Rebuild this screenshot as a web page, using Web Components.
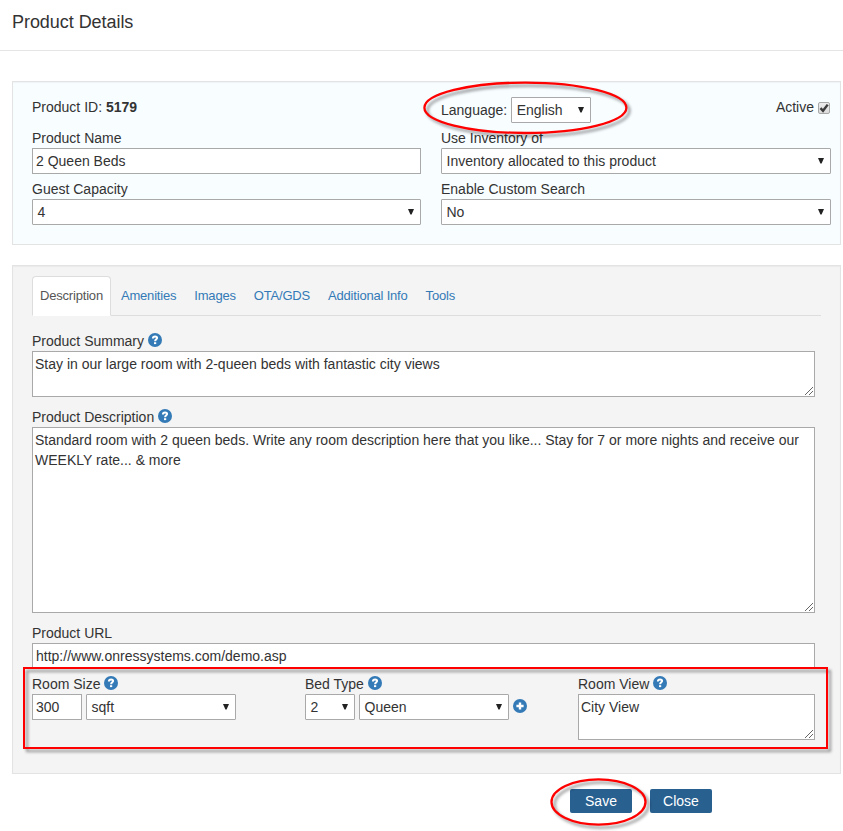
<!DOCTYPE html>
<html lang="en">
<head>
<meta charset="utf-8">
<title>Product Details</title>
<style>
html,body{margin:0;padding:0}
body{width:843px;height:831px;overflow:hidden;background:#fff;color:#333;font:14px/20px "Liberation Sans",Arial,sans-serif;position:relative}
</style>
</head>
<body>
<product-page></product-page>
<script>
function define(name, html, setup) {
  customElements.define(name, class extends HTMLElement {
    constructor() {
      super();
      this.attachShadow({ mode: 'open' }).innerHTML = html;
    }
    connectedCallback() { if (setup) setup(this, this.shadowRoot); }
  });
}

define('text-box', `<style>
:host{display:block;box-sizing:border-box;height:26px;border:1px solid #a9a9a9;background:#fff;padding:2px 3px;white-space:nowrap}
</style><slot></slot>`);

define('select-box', `<style>
:host{display:flex;box-sizing:border-box;height:26px;border:1px solid #a9a9a9;border-radius:1px;background:#fff;padding:2px 6px 2px 4.5px;align-items:center;justify-content:space-between;white-space:nowrap}
svg{display:block}
</style><span><slot></slot></span><svg width="6" height="6" viewBox="0 0 6 6"><path d="M0 0H6L3.6 5.6H2.4Z" fill="#222"/></svg>`);

define('text-area', `<style>
:host{display:flex;box-sizing:border-box;height:46px;border:1px solid #a9a9a9;background:#fff;padding:2px 1px 1px 2px;align-items:flex-end}
div{flex:1;align-self:flex-start;width:0}
svg{display:block;margin-left:-8px}
</style><div><slot></slot></div><svg width="8" height="8" viewBox="0 0 8 8"><path d="M0 8L8 0M4 8L8 4" stroke="#555" stroke-width=".9"/></svg>`);

define('round-icon', `<style>
:host{display:inline-block;width:14px;height:14px;vertical-align:-1px}
svg{display:block}
</style><svg width="14" height="14" viewBox="0 0 14 14"><circle cx="7" cy="7" r="7" fill="#337ab7"/>
<g id="help"><path d="M4.9 5.6C4.9 4.1 5.7 3.5 7.1 3.5C8.4 3.5 9.1 4.1 9.1 5C9.1 6.3 7.1 6.4 7.1 8.3" fill="none" stroke="#fff" stroke-width="2"/><path d="M6 9.2h2.2v1.9H6z" fill="#fff"/></g>
<g id="plus"><path d="M7 3.4v7.2M3.4 7h7.2" stroke="#fff" stroke-width="2.4"/></g></svg>`,
(el, root) => {
  for (const g of root.querySelectorAll('g')) {
    g.style.display = g.id === el.getAttribute('kind') ? 'inline' : 'none';
  }
});

define('form-field', `<style>
:host{display:block}
.label{height:20px;white-space:nowrap}
.row{display:flex;gap:4px;align-items:center}
::slotted([grow]){flex:1}
</style><div class="label"><span></span></div><div class="row"><slot></slot></div>`,
(el, root) => {
  root.querySelector('span').textContent = el.getAttribute('label');
  if (el.hasAttribute('help')) {
    const icon = document.createElement('round-icon');
    icon.setAttribute('kind', 'help');
    icon.style.marginLeft = '4px';
    root.querySelector('.label').append(icon);
  }
});

define('check-box', `<style>
:host{display:block;box-sizing:border-box;width:12px;height:12px;border:1px solid #a8a8a8;border-radius:2px;background:linear-gradient(#ececec,#dcdcdc)}
svg{display:block}
</style><svg width="10" height="10" viewBox="0 0 10 10"><path d="M1.5 5.2L4 7.8L8.7 1.6" fill="none" stroke="#3c3c3c" stroke-width="2.4"/></svg>`);

define('nav-tab', `<style>
:host{display:block;box-sizing:border-box;height:40px;padding:10px 7px;border:1px solid transparent;border-radius:4px 4px 0 0;color:#337ab7;font-size:13px;letter-spacing:-.19px;line-height:18px;white-space:nowrap}
:host([active]){background:#fff;border-color:#ddd #ddd #fff;color:#555}
</style><slot></slot>`);

define('push-button', `<style>
:host{display:block;width:62px;height:24px;line-height:24px;background:#286090;color:#fff;border-radius:2px;text-align:center}
</style><slot></slot>`);

define('form-panel', `<style>
:host{display:block;box-sizing:border-box;border:1px solid #e3e3e3;background:#f4f4f4;box-shadow:inset 0 1px 1px rgba(0,0,0,.04)}
</style><slot></slot>`);

define('red-marks', `<style>
:host{position:absolute;left:0;top:0;width:843px;height:831px;pointer-events:none}
svg{display:block;filter:drop-shadow(3px 3px 1.5px rgba(0,0,0,.42))}
</style><svg width="843" height="831" fill="none" stroke="#f00"><ellipse cx="525.4" cy="107.8" rx="101" ry="25.2" stroke-width="2.3"/><rect x="24" y="668" width="803" height="80" stroke-width="2"/><ellipse cx="598.5" cy="802" rx="47" ry="22.6" stroke-width="2.3"/></svg>`);

define('product-page', `<style>
:host{display:block}
header{border-bottom:1px solid #e5e5e5;box-sizing:border-box;height:51px;padding:9px 12px;font-size:18px;line-height:26px;letter-spacing:-.05px}
main{padding:30px 2px 0 12px;display:flex;flex-direction:column;gap:20px}
.top{height:164px;padding:15px 9px 0 19px;background:#f8fdff}
.grid{display:grid;grid-template-columns:389px 390px;column-gap:20px;row-gap:5px}
.line{display:flex;height:26px;align-items:flex-start}
.lang{justify-content:space-between}
.lang div{display:flex;align-items:center;gap:4px}
.lang select-box{width:80px}
.lang .active{height:20px;gap:4px;margin-right:1px}
.active check-box{margin-top:2px}
.detail{height:509px;padding:10px 19px 0}
nav{display:flex;gap:2px;height:39px;border-bottom:1px solid #ddd;margin-bottom:15px}
.fields{width:783px;display:flex;flex-direction:column;gap:10px}
.tall{height:186px}
.room{display:grid;grid-template-columns:273px 273px 237px;margin-top:-5px}
footer{display:flex;gap:18px;padding:15px 0 0 570px}
</style>
<header>Product Details</header>
<main>
<form-panel class="top"><div class="grid">
<div class="line"><span>Product ID: <b>5179</b></span></div>
<div class="line lang"><div><span>Language:</span><select-box>English</select-box></div><div class="active"><span>Active</span><check-box></check-box></div></div>
<form-field label="Product Name"><text-box grow>2 Queen Beds</text-box></form-field>
<form-field label="Use Inventory of"><select-box grow>Inventory allocated to this product</select-box></form-field>
<form-field label="Guest Capacity"><select-box grow>4</select-box></form-field>
<form-field label="Enable Custom Search"><select-box grow>No</select-box></form-field>
</div></form-panel>
<form-panel class="detail">
<nav><nav-tab active>Description</nav-tab><nav-tab>Amenities</nav-tab><nav-tab>Images</nav-tab><nav-tab>OTA/GDS</nav-tab><nav-tab>Additional Info</nav-tab><nav-tab>Tools</nav-tab></nav>
<div class="fields">
<form-field label="Product Summary" help><text-area grow>Stay in our large room with 2-queen beds with fantastic city views</text-area></form-field>
<form-field label="Product Description" help><text-area grow class="tall">Standard room with 2 queen beds. Write any room description here that you like... Stay for 7 or more nights and receive our WEEKLY rate... &amp; more</text-area></form-field>
<form-field label="Product URL"><text-box grow>http://www.onressystems.com/demo.asp</text-box></form-field>
<div class="room">
<form-field label="Room Size" help><text-box style="width:50px">300</text-box><select-box style="width:150px">sqft</select-box></form-field>
<form-field label="Bed Type" help><select-box style="width:50px">2</select-box><select-box style="width:150px">Queen</select-box><round-icon kind="plus" style="margin-top:-2px"></round-icon></form-field>
<form-field label="Room View" help><text-area grow>City View</text-area></form-field>
</div>
</div>
</form-panel>
</main>
<footer><push-button>Save</push-button><push-button>Close</push-button></footer>
<red-marks></red-marks>`);
</script>
</body>
</html>
